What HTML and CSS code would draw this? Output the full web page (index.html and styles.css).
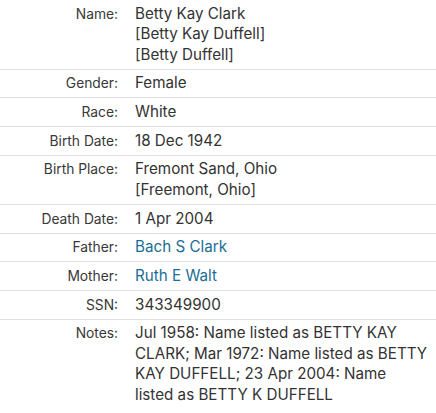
FILE: index.html
```html
<!DOCTYPE html>
<html>
<head>
<meta charset="utf-8">
<link rel="stylesheet" href="styles.css">
</head>
<body>
<div class="record">
  <div class="row"><div class="label">Name:</div><div class="value">Betty Kay Clark<br>[Betty Kay Duffell]<br>[Betty Duffell]</div></div>
  <div class="row"><div class="label">Gender:</div><div class="value">Female</div></div>
  <div class="row"><div class="label">Race:</div><div class="value">White</div></div>
  <div class="row"><div class="label">Birth Date:</div><div class="value">18 Dec 1942</div></div>
  <div class="row"><div class="label">Birth Place:</div><div class="value">Fremont Sand, Ohio<br>[Freemont, Ohio]</div></div>
  <div class="row"><div class="label">Death Date:</div><div class="value">1 Apr 2004</div></div>
  <div class="row"><div class="label">Father:</div><div class="value"><a class="link" href="#">Bach S Clark</a></div></div>
  <div class="row"><div class="label">Mother:</div><div class="value"><a class="link" href="#">Ruth E Walt</a></div></div>
  <div class="row"><div class="label">SSN:</div><div class="value">343349900</div></div>
  <div class="row last"><div class="label">Notes:</div><div class="value">Jul 1958: Name listed as BETTY KAY CLARK; Mar 1972: Name listed as BETTY KAY DUFFELL; 23 Apr 2004: Name<br>listed as BETTY K DUFFELL</div></div>
</div>
</body>
</html>
```
FILE: styles.css
```css
html, body {
  margin: 0;
  padding: 0;
  background: #fff;
}
body {
  font-family: Inter, "Liberation Sans", sans-serif;
  color: #333;
}
.record {
  width: 436px;
}
.row {
  display: flex;
  align-items: baseline;
  border-bottom: 1px solid #e0e0e0;
  padding: 3.6px 0;
  line-height: 20.5px;
}
.row.last {
  border-bottom: none;
}
.label {
  width: 118px;
  flex: none;
  text-align: right;
  font-size: 13.8px;
  color: #383838;
}
.value {
  width: 294px;
  flex: none;
  margin-left: 17px;
  font-size: 15.2px;
}
.link {
  color: #1a6e96;
  text-decoration: none;
}
```
